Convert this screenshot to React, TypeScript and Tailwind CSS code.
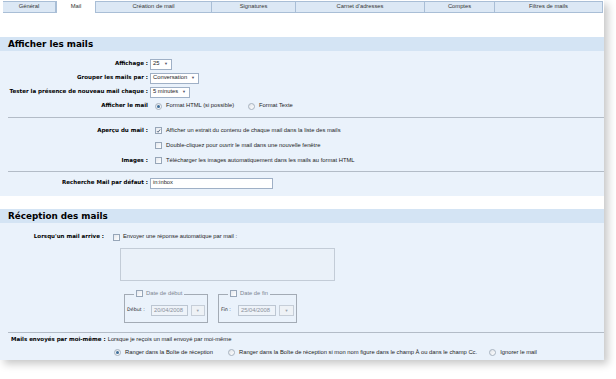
import React from 'react';

const tabs = [
  { label: 'Général', w: 'w-[53px]' },
  { label: 'Mail', w: 'w-[40px]', active: true },
  { label: 'Création de mail', w: 'w-[116px]' },
  { label: 'Signatures', w: 'w-[84px]' },
  { label: "Carnet d'adresses", w: 'w-[129px]' },
  { label: 'Comptes', w: 'w-[70px]' },
  { label: 'Filtres de mails', w: 'w-[108px]' },
];

function Checkbox({ checked = false }: { checked?: boolean }) {
  return (
    <span className="flex h-[7px] w-[7px] shrink-0 items-center justify-center border border-[#97a6b8] bg-gradient-to-br from-[#e4e8ee] to-white">
      {checked && (
        <svg viewBox="0 0 8 8" className="h-[6px] w-[6px]">
          <path d="M1.5 4.2 L3.3 6 L6.6 1.6" fill="none" stroke="#3b4d6b" strokeWidth="1.3" />
        </svg>
      )}
    </span>
  );
}

function Radio({ checked = false }: { checked?: boolean }) {
  return (
    <span className="flex h-[7px] w-[7px] shrink-0 items-center justify-center rounded-full border border-[#a7b2bf] bg-gradient-to-br from-[#dfe3e8] to-white">
      {checked && <span className="h-[3px] w-[3px] rounded-full bg-[#3f6f9a]" />}
    </span>
  );
}

function Select({ value, w }: { value: string; w: string }) {
  return (
    <span className={`flex h-[11px] items-center justify-between border border-[#9fb0c6] bg-white pl-[2px] pr-[3px] ${w}`}>
      <span>{value}</span>
      <span className="text-[4px] text-[#556]">▼</span>
    </span>
  );
}

function Label({ children, w = 'w-[148px]' }: { children: React.ReactNode; w?: string }) {
  return <span className={`shrink-0 text-right font-['DejaVu_Sans',sans-serif] text-[5.5px] font-bold text-black ${w}`}>{children}</span>;
}

function Divider() {
  return <div className="h-px bg-[#b3bcc7]" />;
}

function DateBox({ legend, label, value, w, labelW, inputW }: { legend: string; label: string; value: string; w: string; labelW: string; inputW: string }) {
  return (
    <div className={`relative h-[29px] border border-[#a3abb5] ${w}`}>
      <div className="absolute -top-[5px] left-[9px] flex items-center gap-[3px] bg-[#eaf2fb] px-[2px] text-[#7c8591]">
        <Checkbox />
        <span>{legend}</span>
      </div>
      <div className="flex h-full items-center gap-[3px] px-[2px] pt-[4px]">
        <span className={`shrink-0 font-['DejaVu_Sans',sans-serif] text-[4.8px] ${labelW}`}>{label}</span>
        <span className={`flex h-[11px] items-center border border-[#bcc6d2] bg-[#eef3f9] pl-[2px] text-[#8a929c] ${inputW}`}>{value}</span>
        <span className="flex h-[11px] w-[15px] items-center justify-center border border-[#c6ced8] bg-[#eef2f6] text-[4px] text-[#9aa3ad]">▼</span>
      </div>
    </div>
  );
}

export default function App() {
  return (
    <div className="h-[379px] w-[616px] bg-white font-['Liberation_Sans',sans-serif] text-[5.8px] leading-none text-[#1c1c1c]">
      <div className="w-[604px] bg-white shadow-[4px_4px_8px_rgba(0,0,0,0.22)]">
        {/* tabs */}
        <div className="flex h-[13px] items-end pl-[3px] pt-[1px]">
          {tabs.map((t) => (
            <div
              key={t.label}
              className={`flex h-[12px] items-center justify-center border-[#a9bed6] text-[5.8px] text-[#333] ${t.w} ${
                t.active ? 'border-x bg-white' : 'border-y border-r bg-[#dce8f5]'
              }`}
            >
              {t.label}
            </div>
          ))}
        </div>

        <div className="h-[24px]" />

        {/* Afficher les mails */}
        <div className="flex h-[14px] items-center bg-[#d4e4f4] pl-[8px] font-['DejaVu_Sans',sans-serif] text-[8.8px] font-bold text-black">
          Afficher les mails
        </div>
        <div className="bg-[#eaf2fb] pb-[6px] pt-[6px]">
          <div className="flex h-[14px] items-center gap-[2px]">
            <Label>Affichage :</Label>
            <Select value="25" w="w-[22px]" />
          </div>
          <div className="flex h-[14px] items-center gap-[2px]">
            <Label>Grouper les mails par :</Label>
            <Select value="Conversation" w="w-[49px]" />
          </div>
          <div className="flex h-[14px] items-center gap-[2px]">
            <Label>Tester la présence de nouveau mail chaque :</Label>
            <Select value="5 minutes" w="w-[40px]" />
          </div>
          <div className="flex h-[14px] items-center">
            <Label>Afficher le mail</Label>
            <span className="ml-[7px]"><Radio checked /></span>
            <span className="ml-[4px]">Format HTML (si possible)</span>
            <span className="ml-[14px]"><Radio /></span>
            <span className="ml-[4px]">Format Texte</span>
          </div>
          <div className="ml-[8px] mt-[4px]"><Divider /></div>
          <div className="pt-[5px]">
            <div className="flex h-[15px] items-center">
              <Label>Aperçu du mail :</Label>
              <span className="ml-[7px]"><Checkbox checked /></span>
              <span className="ml-[4px]">Afficher un extrait du contenu de chaque mail dans la liste des mails</span>
            </div>
            <div className="flex h-[15px] items-center">
              <span className="ml-[155px]"><Checkbox /></span>
              <span className="ml-[4px]">Double-cliquez pour ouvrir le mail dans une nouvelle fenêtre</span>
            </div>
            <div className="flex h-[15px] items-center">
              <Label>Images :</Label>
              <span className="ml-[7px]"><Checkbox /></span>
              <span className="ml-[4px]">Télécharger les images automatiquement dans les mails au format HTML</span>
            </div>
          </div>
          <div className="ml-[8px] mt-[3px]"><Divider /></div>
          <div className="mt-[4px] flex h-[14px] items-center gap-[2px]">
            <Label>Recherche Mail par défaut :</Label>
            <span className="flex h-[11px] w-[123px] items-center border border-[#9fb0c6] bg-white pl-[2px]">in:inbox</span>
          </div>
        </div>

        <div className="h-[13px] bg-white" />

        {/* Réception des mails */}
        <div className="flex h-[14px] items-center bg-[#d4e4f4] pl-[8px] font-['DejaVu_Sans',sans-serif] text-[8.8px] font-bold text-black">
          Réception des mails
        </div>
        <div className="bg-[#eaf2fb] pt-[7px]">
          <div className="flex h-[14px] items-center">
            <Label w="w-[104px]">Lorsqu'un mail arrive :</Label>
            <span className="ml-[9px]"><Checkbox /></span>
            <span className="ml-[3px]">Envoyer une réponse automatique par mail :</span>
          </div>
          <div className="ml-[120px] mt-[4px] h-[33px] w-[215px] border border-[#c3ccd7] bg-[#eaf1f9]" />
          <div className="ml-[124px] mt-[13px] flex gap-[10px]">
            <DateBox legend="Date de début" label="Début :" value="20/04/2008" w="w-[84px]" labelW="w-[21px]" inputW="w-[38px]" />
            <DateBox legend="Date de fin" label="Fin :" value="25/04/2008" w="w-[79px]" labelW="w-[14px]" inputW="w-[38px]" />
          </div>
          <div className="ml-[8px] mt-[9px]"><Divider /></div>
          <div className="flex h-[13px] items-center pl-[11px] pt-[1px]">
            <span className="font-['DejaVu_Sans',sans-serif] text-[5.5px] font-bold text-black">Mails envoyés par moi-même :</span>
            <span className="ml-[2px]">Lorsque je reçois un mail envoyé par moi-même</span>
          </div>
          <div className="flex h-[14px] items-center pb-[1px]">
            <span className="ml-[114px]"><Radio checked /></span>
            <span className="ml-[4px]">Ranger dans la Boîte de réception</span>
            <span className="ml-[15px]"><Radio /></span>
            <span className="ml-[4px]">Ranger dans la Boîte de réception si mon nom figure dans le champ À ou dans le champ Cc.</span>
            <span className="ml-[12px]"><Radio /></span>
            <span className="ml-[4px]">Ignorer le mail</span>
          </div>
        </div>
      </div>
    </div>
  );
}
